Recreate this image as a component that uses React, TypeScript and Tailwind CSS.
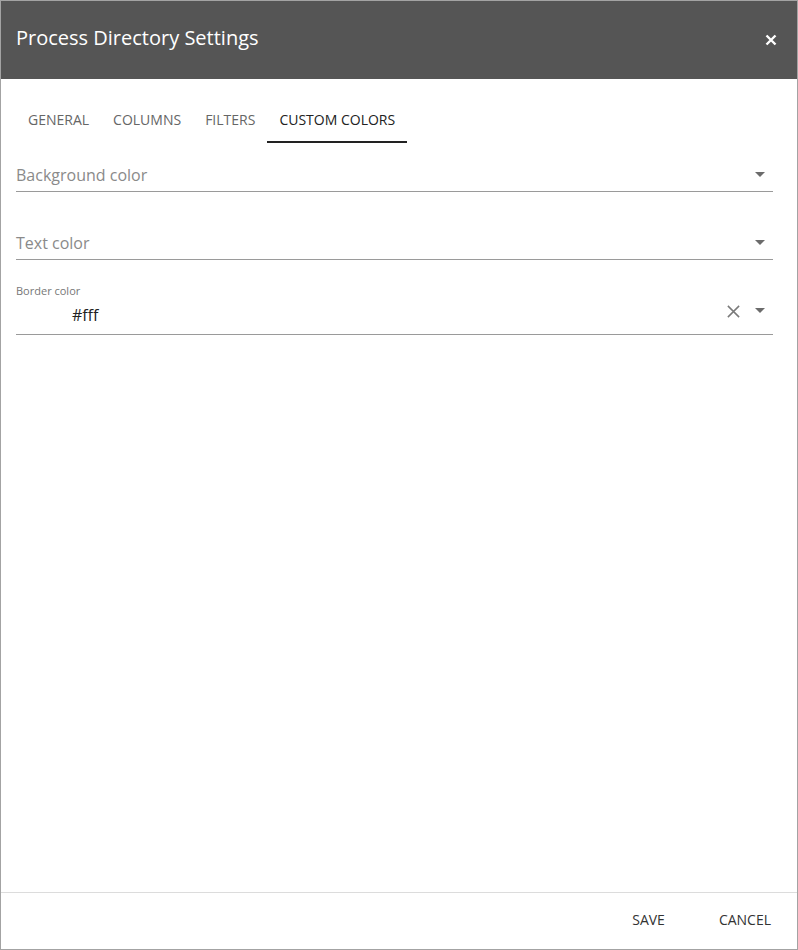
import React from "react";

const font = { fontFamily: '"Open Sans", "Liberation Sans", sans-serif' };

const Caret = () => (
  <svg width="10" height="5" viewBox="0 0 10 5" className="shrink-0">
    <path d="M0 0 L10 0 L5 5 Z" fill="#6b6b6b" />
  </svg>
);

const SelectField: React.FC<{ label: string; value?: string; clearable?: boolean }> = ({
  label,
  value,
  clearable,
}) => {
  if (value) {
    return (
      <div className="relative h-[52px] border-b border-[#9a9a9a]">
        <div className="absolute left-0 top-0 text-[11px] leading-4 text-[#777]">{label}</div>
        <div className="flex h-full items-end pb-[7px]">
          <span className="pl-[56px] text-[16px] leading-6 text-[#222] flex-1">{value}</span>
          {clearable && (
            <svg width="15" height="15" viewBox="0 0 16 16" className="mr-[14px] mb-[8px]">
              <path d="M2 2 L14 14 M14 2 L2 14" stroke="#7a7a7a" strokeWidth="1.6" />
            </svg>
          )}
          <div className="mr-[8px] mb-[14px]">
            <Caret />
          </div>
        </div>
      </div>
    );
  }
  return (
    <div className="flex h-[36px] items-center border-b border-[#9a9a9a]">
      <span className="flex-1 text-[16px] text-[#8a8a8a] pt-[2px]">{label}</span>
      <div className="mr-[8px] pt-[1px]">
        <Caret />
      </div>
    </div>
  );
};

const tabs = ["GENERAL", "COLUMNS", "FILTERS", "CUSTOM COLORS"];

export default function App() {
  return (
    <div style={font} className="h-[950px] w-[798px] flex flex-col border border-[#a3a3a3] bg-white">
      {/* Header */}
      <div className="h-[78px] shrink-0 bg-[#555555] flex items-center justify-between pl-[15px] pr-[20px]">
        <h1 className="text-[20px] text-white leading-none pb-[5px]">Process Directory Settings</h1>
        <svg width="12" height="12" viewBox="0 0 12 12" className="mb-[1px]">
          <path d="M1.5 1.5 L10.5 10.5 M10.5 1.5 L1.5 10.5" stroke="#fff" strokeWidth="2.4" />
        </svg>
      </div>

      {/* Tabs */}
      <div className="flex pl-[15px] pt-[18px]">
        {tabs.map((t, i) => {
          const active = i === tabs.length - 1;
          return (
            <div
              key={t}
              className={
                "h-[46px] px-[12px] flex items-center text-[14px] " +
                (active ? "text-[#222] border-b-2 border-[#222]" : "text-[#666] border-b-2 border-transparent")
              }
            >
              {t}
            </div>
          );
        })}
      </div>

      {/* Fields */}
      <div className="flex-1 px-[15px] pr-[24px]">
        <div className="pt-[13px]">
          <SelectField label="Background color" />
        </div>
        <div className="pt-[32px]">
          <SelectField label="Text color" />
        </div>
        <div className="pt-[23px]">
          <SelectField label="Border color" value="#fff" clearable />
        </div>
      </div>

      {/* Footer */}
      <div className="h-[57px] shrink-0 border-t border-[#dcdcdc] flex items-center justify-end pr-[10px] pb-[4px]">
        <button className="px-[16px] h-[36px] text-[14px] text-[#333]">SAVE</button>
        <button className="px-[16px] h-[36px] text-[14px] text-[#333] ml-[22px]">CANCEL</button>
      </div>
    </div>
  );
}
